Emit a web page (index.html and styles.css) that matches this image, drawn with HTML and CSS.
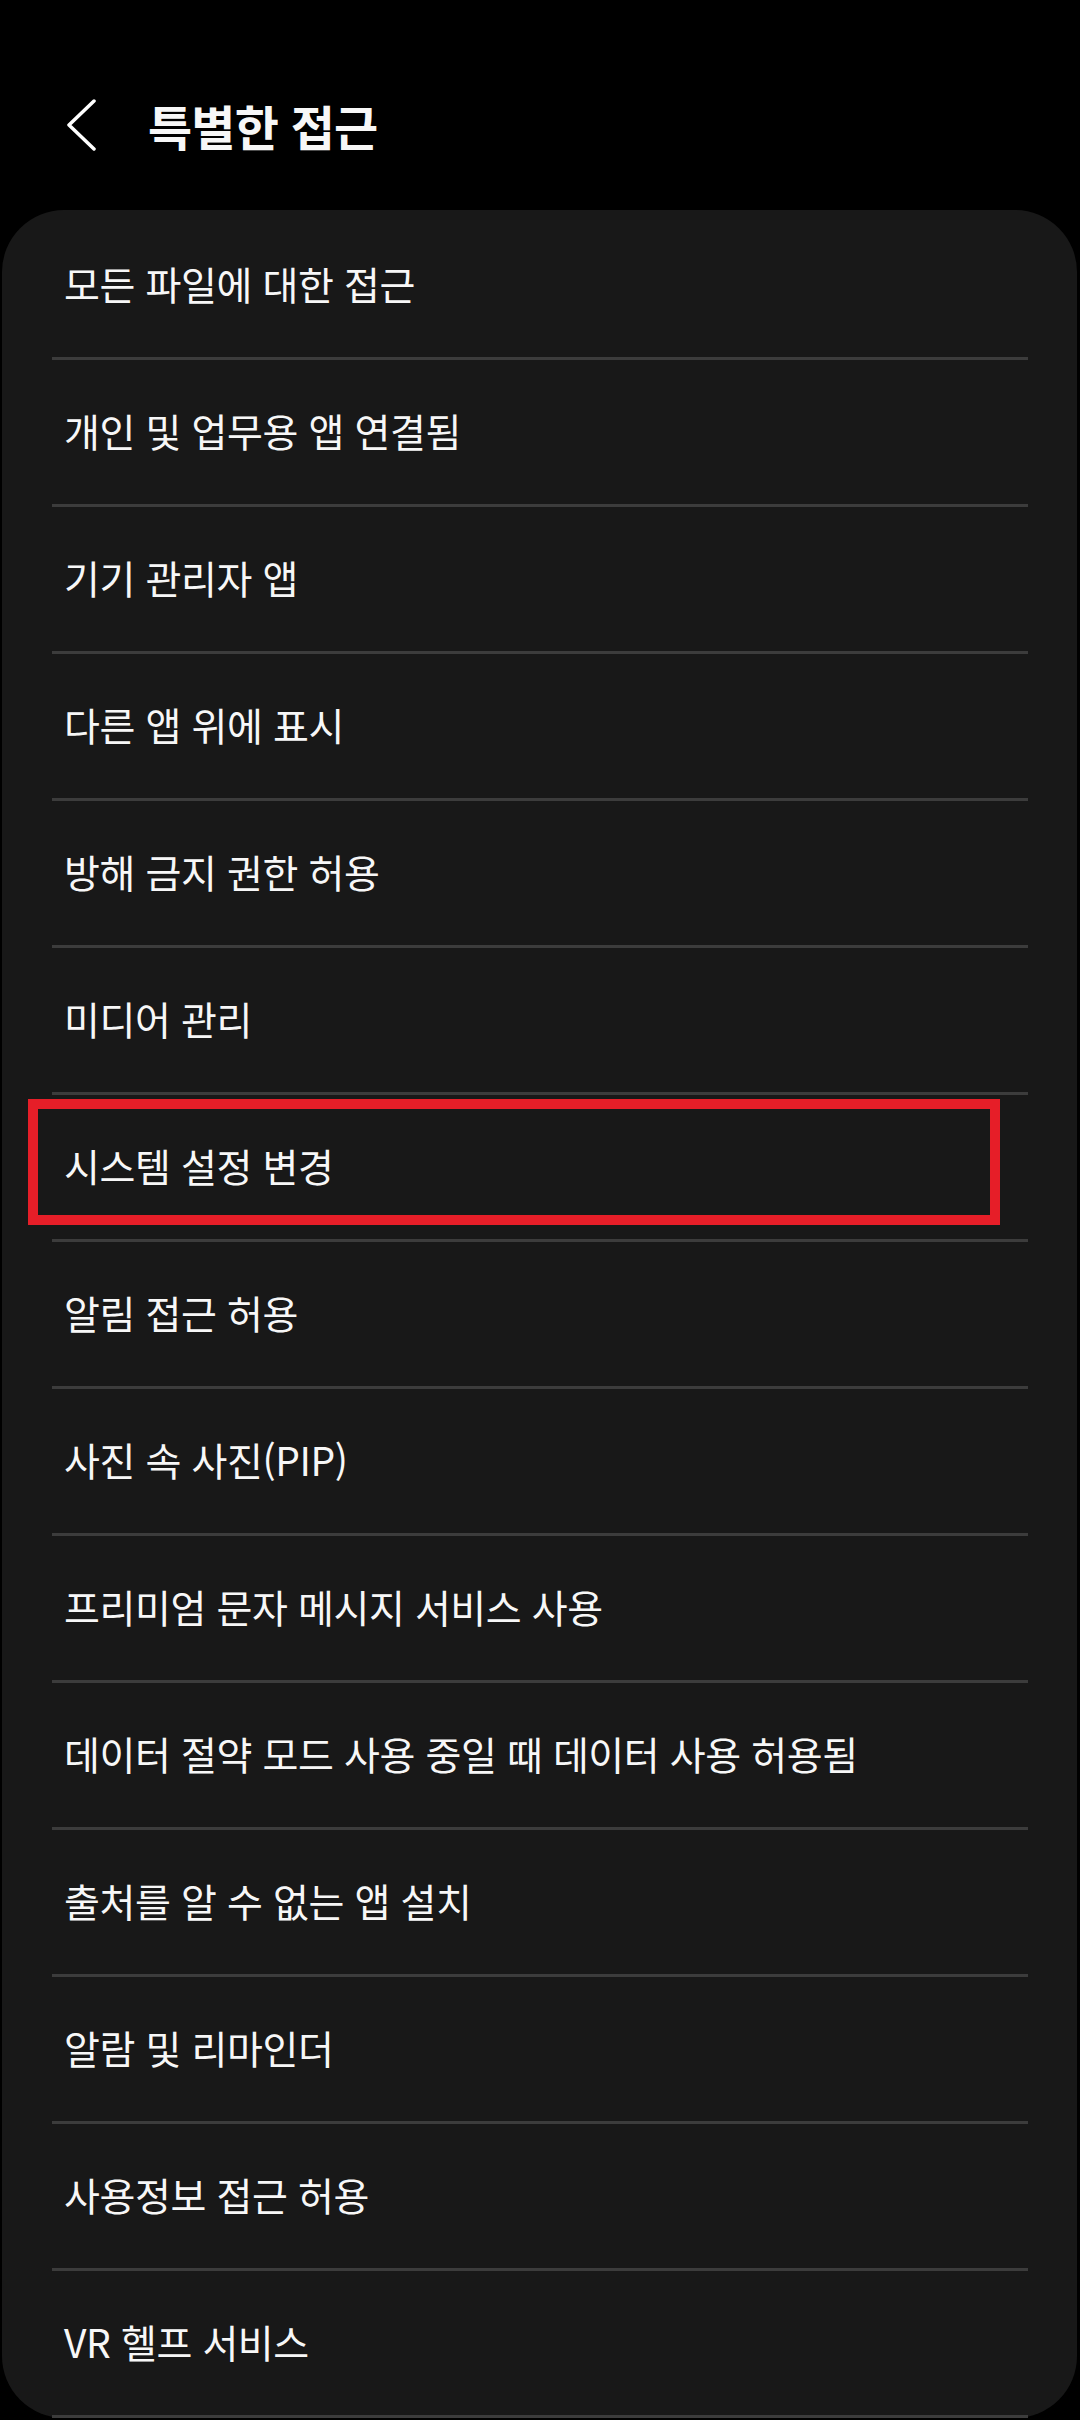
FILE: index.html
```html
<!DOCTYPE html>
<html lang="ko">
<head>
  <meta charset="UTF-8" />
  <meta name="viewport" content="width=device-width, initial-scale=1.0"/>
  <title>특별한 접근</title>
  <link rel="stylesheet" href="styles.css">
</head>
<body>
  <div class="header">
    <button class="back-btn" aria-label="뒤로">
      <svg width="30" height="56" viewBox="0 0 30 56">
        <polyline points="27,4 2,28 27,52" fill="none" stroke="#fff" stroke-width="3.5" stroke-linecap="round" stroke-linejoin="round"/>
      </svg>
    </button>
    <h1>특별한 접근</h1>
  </div>

  <div class="card">
    <div class="row">모든 파일에 대한 접근</div>
    <div class="row">개인 및 업무용 앱 연결됨</div>
    <div class="row">기기 관리자 앱</div>
    <div class="row">다른 앱 위에 표시</div>
    <div class="row">방해 금지 권한 허용</div>
    <div class="row">미디어 관리</div>
    <div class="row highlight"><span class="mark"></span>시스템 설정 변경</div>
    <div class="row">알림 접근 허용</div>
    <div class="row">사진 속 사진(PIP)</div>
    <div class="row">프리미엄 문자 메시지 서비스 사용</div>
    <div class="row">데이터 절약 모드 사용 중일 때 데이터 사용 허용됨</div>
    <div class="row">출처를 알 수 없는 앱 설치</div>
    <div class="row">알람 및 리마인더</div>
    <div class="row">사용정보 접근 허용</div>
    <div class="row">VR 헬프 서비스</div>
  </div>
</body>
</html>
```

FILE: styles.css
```css
:root {
  --card-bg: #181818;
  --divider: #3c3c3c;
  --text: #f7f7f7;
  --mark: #e61e28;
}

* {
  box-sizing: border-box;
}

html, body {
  background: #000;
}

body {
  margin: 0;
  font-family: "Noto Sans CJK KR", "Noto Sans", sans-serif;
  color: var(--text);
  width: 1080px;
  height: 2420px;
  overflow: hidden;
}

.header {
  height: 210px;
  display: flex;
  align-items: center;
  padding: 40px 0 0 67px;
}

.back-btn {
  background: none;
  border: none;
  padding: 0;
  width: 30px;
  height: 56px;
  display: flex;
}

.header h1 {
  margin: 0 0 0 51px;
  font-size: 48px;
  font-weight: 700;
  letter-spacing: -0.8px;
  line-height: 1;
}

.card {
  margin: 0 3px 0 2px;
  background: var(--card-bg);
  border-radius: 62px;
  padding-top: 3px;
}

.row {
  position: relative;
  height: 147px;
  display: flex;
  align-items: center;
  padding: 0 0 5px 12px;
  font-size: 39px;
  letter-spacing: -0.4px;
  border-bottom: 3px solid var(--divider);
  margin: 0 49px 0 50px;
}

.mark {
  position: absolute;
  left: -24px;
  top: 4px;
  width: 972px;
  height: 126px;
  border: 10px solid var(--mark);
}
```
